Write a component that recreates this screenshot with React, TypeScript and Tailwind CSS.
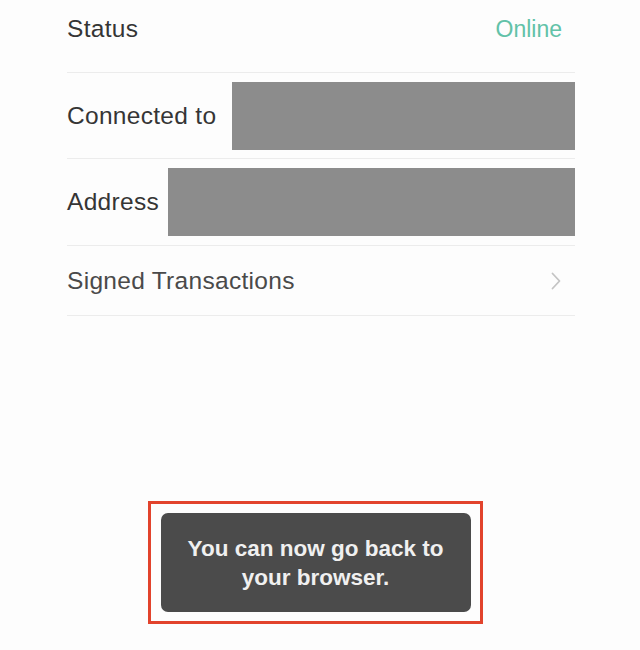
import React from "react";

const font = { fontFamily: '"Liberation Sans", Arial, sans-serif' };

function Divider() {
  return <div className="h-px bg-[#ececec]" />;
}

function Redacted({ width }: { width: string }) {
  return <div className={`h-[68px] bg-[#8c8c8c] ${width}`} />;
}

const label = "text-[24.5px] leading-[28px] tracking-[0.3px]";

export default function App() {
  return (
    <div className="w-[640px] h-[650px] bg-[#fdfdfd] overflow-hidden" style={font}>
      <div className="pl-[67px] pr-[65px]">
        {/* Status */}
        <div className="h-[72px] flex items-start justify-between pt-[15px] pr-[13px]">
          <span className={`${label} text-[#353535]`}>Status</span>
          <span className="text-[23px] leading-[28px] text-[#62c2a8]">Online</span>
        </div>
        <Divider />

        {/* Connected to */}
        <div className="h-[85px] flex items-center justify-between">
          <span className={`${label} text-[#353535]`}>Connected to</span>
          <Redacted width="w-[343px]" />
        </div>
        <Divider />

        {/* Address */}
        <div className="h-[86px] flex items-center justify-between">
          <span className={`${label} text-[#353535]`}>Address</span>
          <Redacted width="w-[407px]" />
        </div>
        <Divider />

        {/* Signed Transactions */}
        <div className="h-[69px] flex items-center justify-between pr-[14px]">
          <span className={`${label} text-[#4a4a4a]`}>Signed Transactions</span>
          <svg width="10" height="18" viewBox="0 0 10 18" fill="none">
            <path d="M1.5 1.5 L8.5 9 L1.5 16.5" stroke="#c4c4c4" strokeWidth="1.8" strokeLinecap="round" strokeLinejoin="round" />
          </svg>
        </div>
        <Divider />
      </div>

      {/* Toast */}
      <div className="mt-[185px] flex justify-center pr-[10px]">
        <div className="w-[335px] border-[3px] border-[#e2432c] pt-[9px] pb-[9px] pl-[10px] pr-[9px]">
          <div className="h-[99px] rounded-[7px] bg-[#4b4b4b] flex items-center justify-center">
            <p className="text-center text-[22.5px] leading-[29px] font-semibold text-[#f0f0f0]">
              You can now go back to
              <br />
              your browser.
            </p>
          </div>
        </div>
      </div>
    </div>
  );
}
